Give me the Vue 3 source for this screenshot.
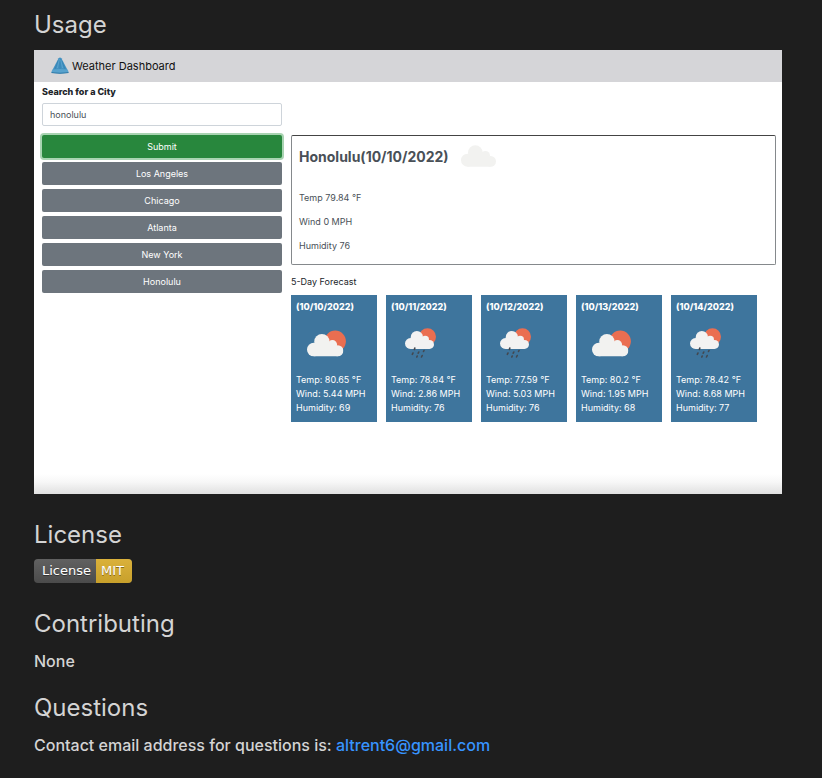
<script setup>
import { ref } from 'vue'

const city = ref('honolulu')
const history = ['Los Angeles', 'Chicago', 'Atlanta', 'New York', 'Honolulu']
const forecast = [
  { date: '10/10/2022', icon: 'cloud', temp: '80.65', wind: '5.44', humidity: 69 },
  { date: '10/11/2022', icon: 'rain', temp: '78.84', wind: '2.86', humidity: 76 },
  { date: '10/12/2022', icon: 'rain', temp: '77.59', wind: '5.03', humidity: 76 },
  { date: '10/13/2022', icon: 'cloud', temp: '80.2', wind: '1.95', humidity: 68 },
  { date: '10/14/2022', icon: 'rain', temp: '78.42', wind: '8.68', humidity: 77 }
]
</script>

<template>
  <main class="readme">
    <h2>Usage</h2>
    <section class="dashboard">
      <header class="topbar">
        <svg class="logo" viewBox="0 0 18 18" aria-hidden="true">
          <path d="M7.600 1.300Q9 -.2 10.400 1.300L16.800 13.500H1.200Z" fill="#4391c1" />
          <path d="M7.500 3L4 12M9 2.500V12M10.500 3.500L14 12" stroke="#3583b3" stroke-width=".8" fill="none" />
          <path d="M8.400 2L6.400 11M9.800 3L11.600 11" stroke="#62a9d2" stroke-width=".7" fill="none" />
          <path d="M1.600 12.600Q9 11.200 16.400 12.600Q17.600 14 17.600 15.600Q9 17.200.4 15.600Q.4 14 1.600 12.600Z" fill="#58a2cd" />
          <path d="M.6 15Q9 16.600 17.400 15L17.600 16Q9 17.600 .4 16Z" fill="#2b78a8" />
        </svg>
        <span>Weather Dashboard</span>
      </header>
      <div class="content">
        <form class="search" @submit.prevent>
          <label for="city">Search for a City</label>
          <input id="city" v-model="city" type="text" />
          <button class="submit" type="submit">Submit</button>
          <div class="history">
            <button v-for="name in history" :key="name" class="past" type="button">{{ name }}</button>
          </div>
        </form>
        <div class="results">
          <article class="today">
            <div class="today-head">
              <h3>Honolulu(10/10/2022)</h3>
              <svg class="today-icon" viewBox="0 0 36 24" aria-hidden="true">
                <symbol id="cloud" viewBox="0 0 36.400 22.400">
                  <circle cx="6.800" cy="15.600" r="6.800" />
                  <circle cx="14.900" cy="7.700" r="7.700" />
                  <circle cx="25.400" cy="10.700" r="4.700" />
                  <circle cx="30.800" cy="16.800" r="5.600" />
                  <path d="M6.800 10H26L30.800 14V22.400H6.800Z" />
                </symbol>
                <use href="#cloud" x="0" y="1" width="35" height="22" fill="#f2f2f0" />
              </svg>
            </div>
            <p>Temp 79.84 °F</p>
            <p>Wind 0 MPH</p>
            <p>Humidity 76</p>
          </article>
          <p class="forecast-title">5-Day Forecast</p>
          <div class="forecast">
            <article v-for="day in forecast" :key="day.date" class="day">
              <h4>({{ day.date }})</h4>
              <svg v-if="day.icon === 'cloud'" class="day-icon" viewBox="0 0 50 50" aria-hidden="true">
                <circle cx="34.200" cy="22.300" r="10.700" fill="#ea6e51" />
                <use href="#cloud" x="6" y="15" width="36.400" height="22.400" fill="#f2f2f0" />
              </svg>
              <svg v-else class="day-icon" viewBox="0 0 50 50" aria-hidden="true">
                <circle cx="31.500" cy="17.800" r="8.500" fill="#ea6e51" />
                <use href="#cloud" x="9" y="12" width="29" height="18" fill="#f2f2f2" />
                <path d="M18.800 29L18.400 30.500M22.800 33L22.200 34.200M28 31.500L27.500 32.500M17 34L16.300 35.300M21.200 37L20.800 38M26.200 36.500L25.500 38" stroke="#434850" stroke-width="1.600" stroke-linecap="round" />
              </svg>
              <p>Temp: {{ day.temp }} °F</p>
              <p>Wind: {{ day.wind }} MPH</p>
              <p>Humidity: {{ day.humidity }}</p>
            </article>
          </div>
        </div>
      </div>
    </section>
    <h2>License</h2>
    <div class="badge"><span>License</span><span class="mit">MIT</span></div>
    <h2>Contributing</h2>
    <p class="text">None</p>
    <h2>Questions</h2>
    <p class="text">Contact email address for questions is: <a href="mailto:altrent6@gmail.com">altrent6@gmail.com</a></p>
  </main>
</template>

<style>
body {
  margin: 0;
  background: #1e1e1e;
}
</style>

<style scoped>
* {
  box-sizing: border-box;
}
.readme {
  padding: 10px 40px 16px 34px;
  font-family: Inter, "Liberation Sans", sans-serif;
  color: #d4d4d4;
}
h2, h3, h4, p {
  margin: 0;
}
h2 {
  margin-top: 26px;
  font-size: 24px;
  font-weight: 400;
  line-height: 30px;
}
h2:first-child {
  margin-top: 0;
}
.text + h2 {
  margin-top: 20px;
}
.dashboard {
  margin-top: 10px;
  padding-bottom: 72px;
  background: linear-gradient(to top, #e0e0e0, #f7f7f7 12px, #fff 20px);
  color: #212529;
  font-size: 9px;
}
.topbar {
  display: flex;
  align-items: center;
  gap: 3px;
  height: 32px;
  padding-left: 17px;
  background: #d5d5d8;
  color: #111;
  font-size: 11px;
}
.logo {
  width: 18px;
  height: 18px;
}
.content {
  display: grid;
  grid-template-columns: 240px 1fr;
  gap: 9px;
  padding: 0 6px 0 8px;
}
.search {
  display: flex;
  flex-direction: column;
}
label {
  padding: 3px 0 4px;
  line-height: 14px;
  font-weight: 800;
}
input, button {
  width: 100%;
  height: 23px;
  border-radius: 2px;
  font-family: inherit;
  font-size: 9px;
}
input {
  margin-bottom: 9px;
  padding: 0 7px;
  border: 1px solid #ced4da;
  background: #fff;
  color: #495057;
}
button {
  padding: 0;
  border: 0;
  color: #fff;
}
.submit {
  background: #28873d;
  box-shadow: 0 0 0 2px #a9d4b2;
}
.history {
  display: grid;
  gap: 4px;
  padding-top: 4px;
}
.past {
  background: #6d757d;
}
.results {
  padding-top: 53px;
}
.today {
  height: 130px;
  padding: 8px 7px;
  border: 1px solid #85898c;
  border-top-color: #444;
  border-radius: 2px;
  color: #495057;
}
.today-head {
  display: flex;
  align-items: center;
  gap: 12px;
  height: 24px;
  margin-bottom: 18px;
}
.today-head h3 {
  font-size: 14px;
  font-weight: 700;
}
.today-icon {
  width: 36px;
  height: 24px;
}
.today p {
  line-height: 24px;
}
.forecast-title {
  margin: 10px 0 6px;
  line-height: 14px;
}
.forecast {
  display: flex;
  gap: 9px;
}
.day {
  width: 86px;
  padding: 5px 5px 7px;
  background: #3e759d;
  color: #fff;
  line-height: 14px;
}
h4 {
  margin-bottom: 5px;
  font-size: 9px;
  font-weight: 800;
}
.day-icon {
  display: block;
  width: 50px;
  height: 50px;
  margin: 0 0 4px 5px;
}
.day p {
  white-space: nowrap;
}
.badge {
  display: flex;
  width: max-content;
  height: 24px;
  margin-top: 9px;
  overflow: hidden;
  border-radius: 4px;
  background: linear-gradient(#616161, #4b4b4b);
  color: #fff;
  font: 13px/24px "DejaVu Sans", sans-serif;
  text-shadow: 0 1px #0006;
}
.badge span {
  padding: 0 5px 0 8px;
}
.badge .mit {
  padding: 0 8px 0 5px;
  background: linear-gradient(#dab13b, #c8a02b);
}
.text {
  margin-top: 10px;
  font-size: 16px;
  font-weight: 500;
  line-height: 24px;
}
a {
  color: #3794ff;
  text-decoration: none;
}
</style>
